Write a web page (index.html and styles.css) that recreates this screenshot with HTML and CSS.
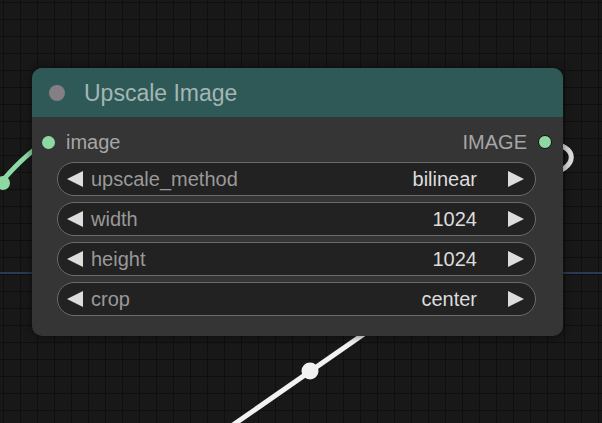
FILE: index.html
```html
<!DOCTYPE html>
<html lang="en">
  <head>
    <meta charset="UTF-8" />
    <title>Upscale Image</title>
    <link rel="stylesheet" href="styles.css">
  </head>
  <body>
    <div class="canvas">
      <svg class="links" width="602" height="423" viewBox="0 0 602 423">
        <line x1="0" y1="273" x2="602" y2="273" stroke="#2a3a52" stroke-width="2" />
        <path d="M -25 215 Q 22 152 48 142" fill="none" stroke="#8cd9a4" stroke-width="5" />
        <circle cx="3" cy="183" r="7" fill="#8cd9a4" />
        <path d="M 545 143 C 580 143, 580 170, 545 175" fill="none" stroke="#dcdcdc" stroke-width="5" />
        <line x1="220" y1="434" x2="420" y2="295" stroke="#f2f2f2" stroke-width="5" />
        <circle cx="310" cy="371" r="8.5" fill="#f2f2f2" />
      </svg>

      <div class="node">
        <div class="node-title">
          <span class="title-dot"></span>
          <span class="title-text">Upscale Image</span>
        </div>
        <div class="node-body">
          <div class="slots">
            <div class="slot">
              <span class="slot-dot"></span>
              <span>image</span>
            </div>
            <div class="slot">
              <span>IMAGE</span>
              <span class="slot-dot out"></span>
            </div>
          </div>
          <div class="widgets">
            <div class="widget">
              <span class="arrow-left"></span>
              <span class="w-label">upscale_method</span>
              <span class="w-value">bilinear</span>
              <span class="arrow-right"></span>
            </div>
            <div class="widget">
              <span class="arrow-left"></span>
              <span class="w-label">width</span>
              <span class="w-value">1024</span>
              <span class="arrow-right"></span>
            </div>
            <div class="widget">
              <span class="arrow-left"></span>
              <span class="w-label">height</span>
              <span class="w-value">1024</span>
              <span class="arrow-right"></span>
            </div>
            <div class="widget">
              <span class="arrow-left"></span>
              <span class="w-label">crop</span>
              <span class="w-value">center</span>
              <span class="arrow-right"></span>
            </div>
          </div>
        </div>
      </div>
    </div>
  </body>
</html>
```

FILE: styles.css
```css
body {
  margin: 0;
  padding: 0;
  background: #171717;
  font-family: "Liberation Sans", Arial, sans-serif;
}

.canvas {
  position: relative;
  width: 602px;
  height: 423px;
  overflow: hidden;
  background-color: #181818;
  background-image:
    linear-gradient(to right, #0f0f0f 1px, transparent 1px),
    linear-gradient(to bottom, #0f0f0f 1px, transparent 1px);
  background-size: 17px 17px;
  background-position: 3px 2px;
}

.links {
  position: absolute;
  left: 0;
  top: 0;
}

.node {
  position: absolute;
  left: 32px;
  top: 68px;
  width: 531px;
  height: 268px;
  background: #353535;
  border-radius: 10px;
  box-shadow: 0 0 8px rgba(0, 0, 0, 0.55);
  display: flex;
  flex-direction: column;
  overflow: hidden;
}

.node-title {
  height: 49px;
  background: #2f5957;
  border-bottom: 1px solid #283b3b;
  display: flex;
  align-items: center;
  padding-left: 17px;
  gap: 19px;
  box-sizing: border-box;
  height: 50px;
}

.title-dot {
  width: 16px;
  height: 16px;
  border-radius: 50%;
  background: #847f84;
}

.title-text {
  font-size: 23px;
  color: #a3b6b5;
  padding-top: 1px;
}

.node-body {
  display: flex;
  flex-direction: column;
}

.slots {
  height: 40px;
  padding: 4px 11px 0 10px;
  display: flex;
  justify-content: space-between;
  align-items: center;
  font-size: 20px;
  color: #a6a6a6;
}

.slot {
  display: flex;
  align-items: center;
  gap: 11px;
}

.slot-dot {
  width: 13px;
  height: 13px;
  border-radius: 50%;
  background: #8cd9a4;
}

.slot-dot.out {
  width: 12px;
  height: 12px;
  border: 1px solid #111;
}

.widgets {
  display: flex;
  flex-direction: column;
  gap: 6px;
  padding: 0 27px 0 25px;
}

.widget {
  height: 34px;
  box-sizing: border-box;
  border: 1px solid #6b6b6b;
  border-radius: 17px;
  background: #222;
  display: flex;
  align-items: center;
  padding: 0 11px 0 9px;
  font-size: 20px;
}

.w-label {
  flex: 1;
  color: #999;
  margin-left: 8px;
}

.w-value {
  color: #ddd;
  margin-right: 31px;
}

.arrow-left {
  width: 0;
  height: 0;
  border-top: 8px solid transparent;
  border-bottom: 8px solid transparent;
  border-right: 16px solid #ddd;
}

.arrow-right {
  width: 0;
  height: 0;
  border-top: 8px solid transparent;
  border-bottom: 8px solid transparent;
  border-left: 16px solid #ddd;
}
```
